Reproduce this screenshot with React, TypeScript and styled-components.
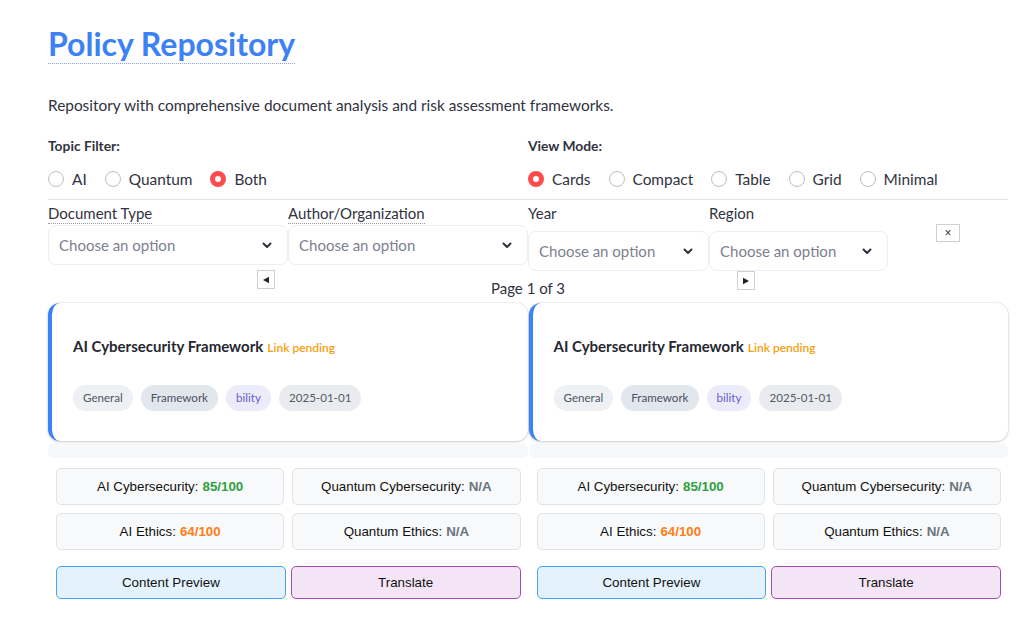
import React from "react";
import styled, { createGlobalStyle } from "styled-components";

const SANS = `"Lato", "Noto Sans", sans-serif`;
const ARIAL = `"Liberation Sans", Arial, sans-serif`;

const Global = createGlobalStyle`
  html, body { margin: 0; padding: 0; background: #ffffff; }
  body { font-family: ${SANS}; color: #31333f; }
  * { box-sizing: border-box; }
`;

const Page = styled.div`
  width: 1028px;
  padding: 25px 20px 0 48px;
`;

const Title = styled.h1`
  margin: 0;
  display: inline-block;
  font-family: ${SANS};
  font-size: 32px;
  font-weight: 700;
  line-height: 38px;
  color: #3d82f5;
  border-bottom: 1px dotted #8a9cf0;
`;

const Subtitle = styled.p`
  margin: 29px 0 0;
  font-size: 15.4px;
  line-height: 24px;
  color: #31333f;
`;

const ControlsRow = styled.div`
  display: grid;
  grid-template-columns: 480px 480px;
  margin-top: 19px;
`;

const ControlGroup = styled.div`
  display: flex;
  flex-direction: column;
`;

const GroupLabel = styled.div`
  font-size: 13.8px;
  font-weight: 700;
  line-height: 20px;
  color: #31333f;
`;

const RadioRow = styled.div`
  display: flex;
  align-items: center;
  gap: 18px;
  margin-top: 13px;
  height: 20px;
`;

const RadioOption = styled.label`
  display: flex;
  align-items: center;
  gap: 8px;
  font-size: 15.4px;
  color: #31333f;
`;

const RadioCircle = styled.span<{ $on?: boolean }>`
  width: 16px;
  height: 16px;
  border-radius: 50%;
  border: ${(p) => (p.$on ? "none" : "1px solid #bdbec4")};
  background: ${(p) => (p.$on ? "#ff4b4b" : "#ffffff")};
  display: flex;
  align-items: center;
  justify-content: center;
  &::after {
    content: "";
    display: ${(p) => (p.$on ? "block" : "none")};
    width: 6px;
    height: 6px;
    border-radius: 50%;
    background: #ffffff;
  }
`;

const Divider = styled.div`
  height: 1px;
  background: #e4e4e7;
  margin-top: 10px;
  width: 960px;
`;

const FilterRow = styled.div`
  display: grid;
  grid-template-columns: 240px 240px 181px 179px 1fr;
  margin-top: 3px;
`;

const Field = styled.div<{ $drop?: number }>`
  display: flex;
  flex-direction: column;
  & > :last-child {
    margin-top: ${(p) => 1 + (p.$drop ?? 0)}px;
  }
`;

const FieldLabel = styled.span<{ $dotted?: boolean }>`
  align-self: flex-start;
  font-size: 15px;
  line-height: 20px;
  color: #31333f;
  border-bottom: ${(p) => (p.$dotted ? "1px dotted #9a9aa3" : "1px solid transparent")};
`;

const SelectBox = styled.div`
  height: 40px;
  border: 1px solid #eeeef1;
  border-radius: 8px;
  background: #ffffff;
  display: flex;
  align-items: center;
  justify-content: space-between;
  padding: 0 14px 0 10px;
  font-size: 15px;
  color: #7d808f;
`;

const ClearCell = styled.div`
  display: flex;
  justify-content: flex-start;
  padding: 21px 0 0 48px;
`;

const SmallButton = styled.button`
  width: 24px;
  height: 18px;
  padding: 0;
  border: 1px solid #cfcfd4;
  background: #ffffff;
  border-radius: 0;
  display: flex;
  align-items: center;
  justify-content: center;
  font-size: 12px;
  color: #333;
  font-family: ${ARIAL};
`;

const PagerRow = styled.div`
  display: grid;
  grid-template-columns: 960px;
  height: 32px;
  margin-top: -1px;
`;

const PagerButton = styled.button<{ $left: number; $top: number }>`
  grid-area: 1 / 1;
  justify-self: start;
  align-self: start;
  margin-left: ${(p) => p.$left}px;
  margin-top: ${(p) => p.$top}px;
  width: 18px;
  height: 19px;
  padding: 0;
  border: 1px solid #cfcfd4;
  background: #ffffff;
  border-radius: 0;
  display: flex;
  align-items: center;
  justify-content: center;
`;

const PageText = styled.span`
  grid-area: 1 / 1;
  justify-self: center;
  align-self: end;
  font-size: 15px;
  line-height: 20px;
  margin-bottom: 4px;
  color: #31333f;
`;

const Columns = styled.div`
  display: grid;
  grid-template-columns: 1fr 1fr;
  column-gap: 1px;
  width: 960px;
  margin-top: 1px;
`;

const Column = styled.div`
  display: flex;
  flex-direction: column;
`;

const Card = styled.div`
  height: 138px;
  background: #ffffff;
  border-radius: 12px;
  border-left: 4px solid #3b82f6;
  box-shadow: 0 1px 3px rgba(0, 0, 0, 0.16), 0 0 0 1px rgba(0, 0, 0, 0.05);
  padding: 32px 20px 0 21px;
`;

const CardTitle = styled.div`
  display: flex;
  align-items: baseline;
  gap: 4px;
  height: 22px;
  line-height: 22px;
`;

const CardName = styled.span`
  font-size: 15px;
  font-weight: 700;
  color: #262730;
`;

const Pending = styled.span`
  font-size: 12px;
  font-weight: 600;
  color: #f59e0b;
`;

const TagRow = styled.div`
  display: flex;
  gap: 8px;
  margin-top: 28px;
`;

const Tag = styled.span<{ $bg: string; $fg: string }>`
  height: 26px;
  line-height: 26px;
  padding: 0 10px;
  border-radius: 13px;
  font-size: 11.6px;
  background: ${(p) => p.$bg};
  color: ${(p) => p.$fg};
`;

const Strip = styled.div`
  height: 15px;
  margin-top: 2px;
  background: #f7f8fa;
  border-radius: 6px;
`;

const MetricGrid = styled.div`
  display: grid;
  grid-template-columns: 1fr 1fr;
  gap: 8px;
  padding: 0 7px 0 8px;
  margin-top: 10px;
`;

const Metric = styled.div`
  height: 37px;
  background: #f8f9fa;
  border: 1px solid #e1e3e6;
  border-radius: 5px;
  display: flex;
  align-items: center;
  justify-content: center;
  font-family: ${ARIAL};
  font-size: 13.333px;
  color: #111111;
`;

const Score = styled.b<{ $c: string }>`
  margin-left: 4px;
  color: ${(p) => p.$c};
`;

const ActionRow = styled.div`
  display: grid;
  grid-template-columns: 1fr 1fr;
  gap: 5px;
  padding: 0 7px 0 8px;
  margin-top: 16px;
`;

const Action = styled.button<{ $bg: string; $bd: string }>`
  height: 33px;
  background: ${(p) => p.$bg};
  border: 1px solid ${(p) => p.$bd};
  border-radius: 5px;
  font-family: ${ARIAL};
  font-size: 13.333px;
  color: #111111;
  padding: 0;
`;

const Chevron = () => (
  <svg width="12" height="12" viewBox="0 0 12 12" fill="none">
    <path d="M2.5 4.5 L6 8 L9.5 4.5" stroke="#31333f" strokeWidth="2" strokeLinecap="round" strokeLinejoin="round" />
  </svg>
);

const Tri = ({ dir }: { dir: "left" | "right" }) => (
  <svg width="8" height="8" viewBox="0 0 8 8">
    {dir === "left" ? <path d="M1 4 L7 0.8 L7 7.2 Z" fill="#222" /> : <path d="M7 4 L1 0.8 L1 7.2 Z" fill="#222" />}
  </svg>
);

const Radio = ({ label, on }: { label: string; on?: boolean }) => (
  <RadioOption>
    <RadioCircle $on={on} />
    {label}
  </RadioOption>
);

const PolicyColumn = () => (
  <Column>
    <Card>
      <CardTitle>
        <CardName>AI Cybersecurity Framework</CardName>
        <Pending>Link pending</Pending>
      </CardTitle>
      <TagRow>
        <Tag $bg="#eef0f3" $fg="#4f5563">General</Tag>
        <Tag $bg="#e2e7ee" $fg="#4a5160">Framework</Tag>
        <Tag $bg="#ebebfa" $fg="#6b5bc9">bility</Tag>
        <Tag $bg="#e9ebef" $fg="#555b66">2025-01-01</Tag>
      </TagRow>
    </Card>
    <Strip />
    <MetricGrid>
      <Metric>
        AI Cybersecurity:<Score $c="#2ea043">85/100</Score>
      </Metric>
      <Metric>
        Quantum Cybersecurity:<Score $c="#6c757d">N/A</Score>
      </Metric>
      <Metric>
        AI Ethics:<Score $c="#fd7e14">64/100</Score>
      </Metric>
      <Metric>
        Quantum Ethics:<Score $c="#6c757d">N/A</Score>
      </Metric>
    </MetricGrid>
    <ActionRow>
      <Action $bg="#e3f2fd" $bd="#42a5f5">Content Preview</Action>
      <Action $bg="#f3e5f5" $bd="#ab47bc">Translate</Action>
    </ActionRow>
  </Column>
);

export default function App() {
  return (
    <>
      <Global />
      <Page>
        <Title>Policy Repository</Title>
        <Subtitle>Repository with comprehensive document analysis and risk assessment frameworks.</Subtitle>
        <ControlsRow>
          <ControlGroup>
            <GroupLabel>Topic Filter:</GroupLabel>
            <RadioRow>
              <Radio label="AI" />
              <Radio label="Quantum" />
              <Radio label="Both" on />
            </RadioRow>
          </ControlGroup>
          <ControlGroup>
            <GroupLabel>View Mode:</GroupLabel>
            <RadioRow>
              <Radio label="Cards" on />
              <Radio label="Compact" />
              <Radio label="Table" />
              <Radio label="Grid" />
              <Radio label="Minimal" />
            </RadioRow>
          </ControlGroup>
        </ControlsRow>
        <Divider />
        <FilterRow>
          <Field>
            <FieldLabel $dotted>Document Type</FieldLabel>
            <SelectBox>
              Choose an option
              <Chevron />
            </SelectBox>
          </Field>
          <Field>
            <FieldLabel $dotted>Author/Organization</FieldLabel>
            <SelectBox>
              Choose an option
              <Chevron />
            </SelectBox>
          </Field>
          <Field $drop={6}>
            <FieldLabel>Year</FieldLabel>
            <SelectBox>
              Choose an option
              <Chevron />
            </SelectBox>
          </Field>
          <Field $drop={6}>
            <FieldLabel>Region</FieldLabel>
            <SelectBox>
              Choose an option
              <Chevron />
            </SelectBox>
          </Field>
          <ClearCell>
            <SmallButton>×</SmallButton>
          </ClearCell>
        </FilterRow>
        <PagerRow>
          <PagerButton $left={209} $top={0}>
            <Tri dir="left" />
          </PagerButton>
          <PageText>Page 1 of 3</PageText>
          <PagerButton $left={689} $top={1}>
            <Tri dir="right" />
          </PagerButton>
        </PagerRow>
        <Columns>
          <PolicyColumn />
          <PolicyColumn />
        </Columns>
      </Page>
    </>
  );
}
